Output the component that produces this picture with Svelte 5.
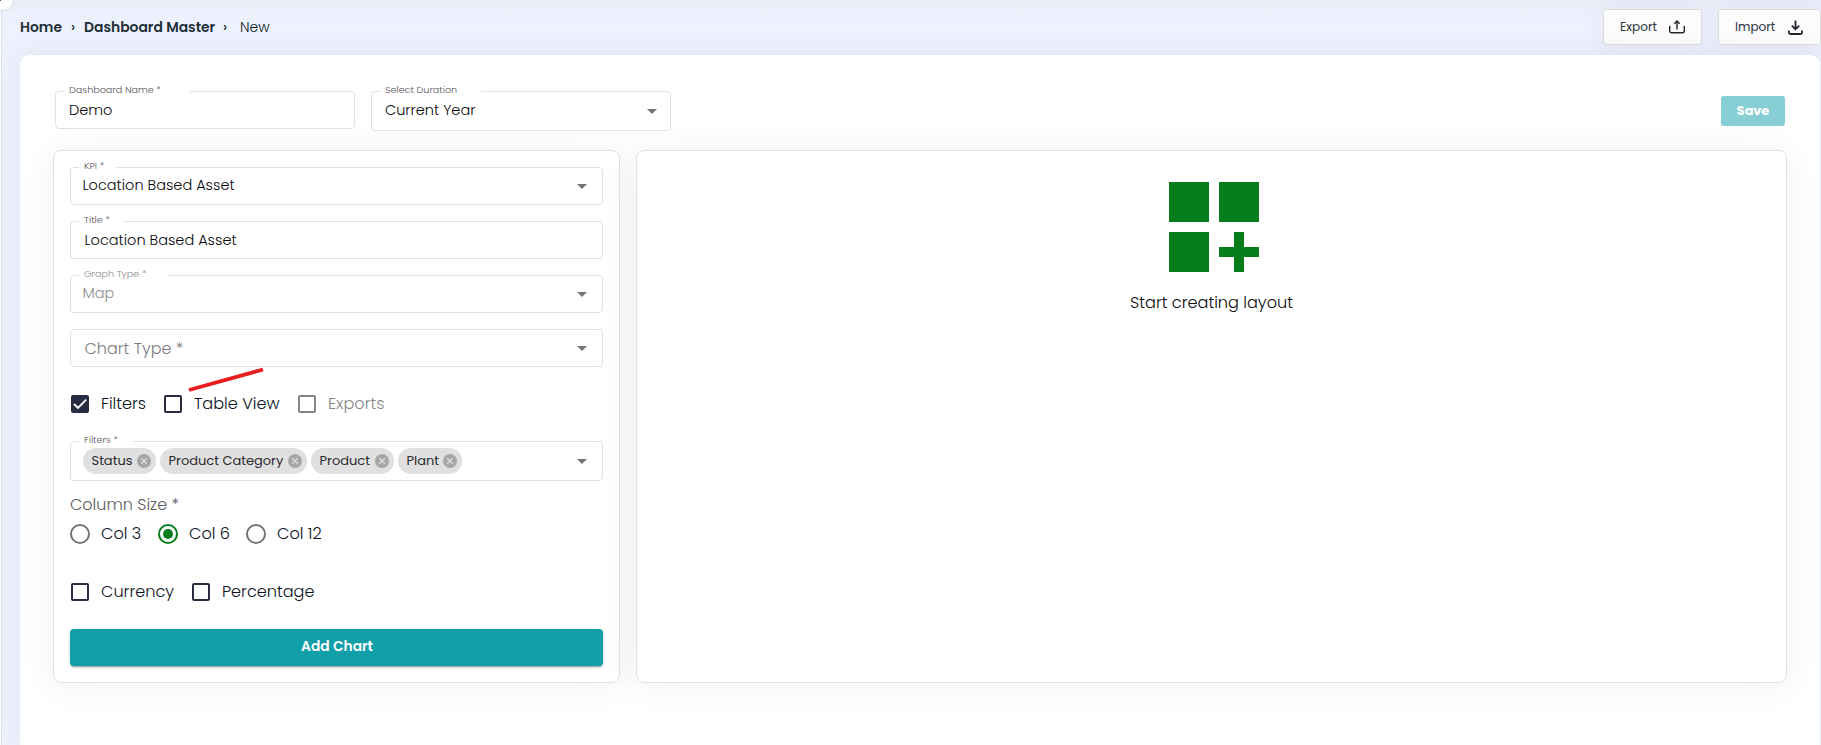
<script>
  const fields = [
    { label: 'KPI *', gap: 37, value: 'Location Based Asset', select: true },
    { label: 'Title *', gap: 44, value: 'Location Based Asset' },
    { label: 'Graph Type *', gap: 89, value: 'Map', select: true, disabled: true }
  ];

  const chips = [
    { text: 'Status', width: 73 },
    { text: 'Product Category', width: 147 },
    { text: 'Product', width: 83 },
    { text: 'Plant', width: 64 }
  ];

  const shown = [
    { text: 'Filters', width: 93, checked: true },
    { text: 'Table View', width: 134 },
    { text: 'Exports', width: 100, disabled: true }
  ];

  const columns = [{ text: 'Col 3' }, { text: 'Col 6', checked: true }, { text: 'Col 12' }];

  const units = [
    { text: 'Currency', width: 121 },
    { text: 'Percentage', width: 130 }
  ];
</script>

{#snippet caret()}
  <svg class="caret" width="10" height="5" viewBox="0 0 10 5"><path d="M0 0h10L5 5z" fill="#757575" /></svg>
{/snippet}

{#snippet label(text, gap)}
  <span class="label" style:width="{gap}px">{text}</span>
{/snippet}

{#snippet check(item)}
  <div class="choice check" class:disabled={item.disabled} style:width="{item.width}px">
    <svg width="18" height="18" viewBox="0 0 18 18">
      {#if item.checked}
        <rect width="18" height="18" rx="2" fill="#272c41" />
        <path d="M3 9l4 4 8.2-8.3" fill="none" stroke="#fff" stroke-width="1.9" />
      {:else}
        <rect x="1" y="1" width="16" height="16" rx="1" fill="none" stroke={item.disabled ? '#858585' : '#272c41'} stroke-width="2" />
      {/if}
    </svg>
    <span>{item.text}</span>
  </div>
{/snippet}

<div class="page">
  <div class="knob"><svg width="4" height="4" viewBox="0 0 4 4"><path d="M0 3L3 0" stroke="#555" /></svg></div>

  <header>
    <nav>
      <b class="home">Home</b><i>›</i><b class="master">Dashboard Master</b><i>›</i><span>New</span>
    </nav>
    <div class="actions">
      <button class="export">
        <span>Export</span>
        <svg width="16" height="14" viewBox="0 0 16 14" fill="none" stroke="#26262e" stroke-width="1.4">
          <path d="M.7 6v5.3q0 1.4 1.4 1.4h11.8q1.4 0 1.4-1.4V6M8 9.5V1.2M5.3 3.7L8 1l2.7 2.7" />
        </svg>
      </button>
      <button class="import">
        <span>Import</span>
        <svg width="15" height="15" viewBox="0 0 15 15" fill="none" stroke="#26262e" stroke-width="1.8">
          <path d="M.9 10.5v2q0 1.5 1.5 1.5h10.2q1.5 0 1.5-1.5v-2M7.5.5V9M3.8 5.6l3.7 3.7 3.7-3.7" />
        </svg>
      </button>
    </div>
  </header>

  <main>
    <div class="top">
      <div class="field name">
        {@render label('Dashboard Name *', 126)}
        <span class="value">Demo</span>
      </div>
      <div class="field duration">
        {@render label('Select Duration', 101)}
        <span class="value">Current Year</span>
        {@render caret()}
      </div>
      <button class="save">Save</button>
    </div>

    <div class="panels">
      <section class="panel form">
        {#each fields as f}
          <div class="field" class:select={f.select} class:disabled={f.disabled}>
            {@render label(f.label, f.gap)}
            <span class="value">{f.value}</span>
            {#if f.select}{@render caret()}{/if}
          </div>
        {/each}
        <div class="field">
          <span class="placeholder">Chart Type *</span>
          {@render caret()}
        </div>

        <div class="choices shown">
          {#each shown as item}{@render check(item)}{/each}
          <svg class="stroke" width="76" height="26" viewBox="0 0 76 26"><path d="M1 23L75 2.5" stroke="#e81c1f" stroke-width="3.8" /></svg>
        </div>

        <div class="field filters">
          {@render label('Filters *', 54)}
          {#each chips as chip}
            <div class="chip" style:width="{chip.width}px">
              <span>{chip.text}</span>
              <svg width="14" height="14" viewBox="0 0 14 14"><circle cx="7" cy="7" r="7" fill="#a6a6a6" /><path d="M4.2 4.2l5.6 5.6M9.8 4.2l-5.6 5.6" stroke="#e0e0e0" stroke-width="1.3" /></svg>
            </div>
          {/each}
          {@render caret()}
        </div>

        <div class="caption">Column Size *</div>
        <div class="choices columns">
          {#each columns as col}
            <div class="choice radio">
              <svg width="20" height="20" viewBox="0 0 20 20">
                <circle cx="10" cy="10" r="9" fill="none" stroke={col.checked ? '#067d1b' : '#757575'} stroke-width="2" />
                {#if col.checked}<circle cx="10" cy="10" r="5" fill="#067d1b" />{/if}
              </svg>
              <span>{col.text}</span>
            </div>
          {/each}
        </div>
        <div class="choices units">
          {#each units as item}{@render check(item)}{/each}
        </div>

        <button class="add">Add Chart</button>
      </section>

      <section class="panel canvas">
        <svg width="90" height="90" viewBox="0 0 90 90" fill="#067d1b" shape-rendering="crispEdges">
          <path d="M0 0h40v40H0zM50 0h40v40H50zM0 50h40v40H0zM65 50h10v15h15v10H75v15H65V75H50V65h15z" />
        </svg>
        <p>Start creating layout</p>
      </section>
    </div>
  </main>
</div>

<style>
  :global(body) { margin: 0; overflow: hidden; }
  .page, .page * { box-sizing: border-box; }
  .page {
    position: relative;
    height: 745px;
    padding: 0 1px 0 20px;
    overflow: hidden;
    background: linear-gradient(90deg, #fff 0 1px, #dcdfea 1px 2px, transparent 2px), linear-gradient(#e9edf8, #eef2fe 22px);
    font-family: Poppins, Inter, sans-serif;
    font-weight: 300;
    color: #09090c;
    display: flex;
    flex-direction: column;
  }
  .knob {
    position: absolute;
    left: -10px;
    top: -14px;
    width: 24px;
    height: 25px;
    border: 1px solid #dcdfe8;
    border-radius: 11px;
    background: #fff;
  }
  .knob svg { position: absolute; left: 8px; top: 12px; }
  button { font-family: inherit; border: 0; padding: 0; }

  header { height: 55px; flex: none; display: flex; justify-content: space-between; }
  nav { display: flex; height: 54px; align-items: center; font-size: 13.9px; color: #1f2f38; }
  nav b { font-weight: 600; white-space: nowrap; }
  nav i { font-style: normal; font-weight: 500; width: 22px; text-align: center; }
  .home { width: 42px; }
  .master { width: 131px; }
  nav .master + i { width: 20px; }
  nav span { margin-left: 5px; color: #0c171d; }
  .actions { display: flex; gap: 16px; padding-top: 9px; margin-right: -1px; }
  .actions button {
    height: 36px;
    border: 1px solid #dcdcde;
    border-radius: 3px;
    background: #fcfcfd;
    box-shadow: 0 0 25px rgba(60, 60, 90, .07);
    display: flex;
    align-items: center;
    padding-left: 16px;
    font-size: 12.1px;
    font-weight: 400;
    color: #2c3442;
  }
  .export { width: 99px; }
  .import { width: 103px; }
  .actions span { width: 49px; text-align: left; }
  .import span { width: 53px; }

  main {
    flex: 1;
    border-radius: 10px 10px 0 0;
    background: #fff;
    box-shadow: 0 0 30px rgba(50, 50, 100, .08);
    padding: 36px 33px 0;
  }
  .top { display: flex; align-items: flex-start; height: 59px; padding-left: 2px; }
  .field {
    position: relative;
    height: 38px;
    flex: none;
    border: 1px solid #e1e1e3;
    border-radius: 4px;
    background: #fff;
    padding: 0 0 0 13.5px;
    display: flex;
    align-items: center;
  }
  .select { padding: 0 0 1px 11.5px; }
  .label {
    position: absolute;
    left: 8px;
    top: -9px;
    height: 13px;
    line-height: 14px;
    padding-left: 5px;
    font-size: 9.6px;
    background: #fff;
    color: #55555a;
    white-space: nowrap;
  }
  .value { font-size: 14.5px; white-space: nowrap; }
  .disabled .value, .disabled .label { color: #8c8c8c; }
  .caret { position: absolute; right: 15px; top: 16px; }
  .name, .duration { width: 300px; padding-left: 13px; }
  .duration { margin-left: 16px; height: 40px; padding-bottom: 2px; }
  .duration .caret { right: 13px; top: 17px; }
  .save {
    margin: 5px 2px 0 auto;
    width: 64px;
    height: 30px;
    border-radius: 3px;
    background: #88cfd5;
    color: #fff;
    font-weight: 700;
    font-size: 12.8px;
    padding-bottom: 1px;
  }

  .panels { display: flex; gap: 16px; height: 533px; }
  .panel {
    border: 1px solid #dfe1e8;
    border-radius: 8px;
    background: #fff;
    box-shadow: 0 3px 40px rgba(0, 0, 0, .06);
  }
  .form { width: 567px; flex: none; padding: 16px; display: flex; flex-direction: column; }
  .form > .field:not(.filters) { margin-bottom: 16px; }
  .placeholder { font-size: 16px; color: #7c7c80; }
  .choices { position: relative; display: flex; height: 20px; flex: none; }
  .choice { display: flex; align-items: center; gap: 12px; font-size: 16.1px; color: #0c1222; white-space: nowrap; flex: none; }
  .choice svg { flex: none; }
  .choice span { line-height: 18px; margin-top: -1px; }
  .choice.disabled { color: #88888c; }
  .check { padding-left: 1px; }
  .radio { width: 88px; gap: 11px; }
  .shown { margin-top: 11px; }
  .stroke { position: absolute; left: 118px; top: -27px; }
  .filters { height: 40px; margin-top: 27px; padding: 0 0 1px 12px; gap: 4px; }
  .filters .caret { top: 17px; }
  .chip {
    height: 26px;
    flex: none;
    border-radius: 13px;
    background: #e0e0e0;
    display: flex;
    align-items: center;
    justify-content: space-between;
    padding: 0 5px 0 8.5px;
    font-size: 13px;
    font-weight: 400;
    color: #2a2a2e;
    white-space: nowrap;
  }
  .caption { margin-top: 14px; height: 20px; line-height: 20px; font-size: 16px; color: #5c5c60; }
  .columns { margin-top: 9px; }
  .units { margin-top: 38px; }
  .add {
    margin-top: 27px;
    height: 37px;
    border-radius: 4px;
    background: #109fa9;
    color: #fff;
    font-weight: 600;
    font-size: 13.8px;
    padding: 0 0 1px 1px;
    box-shadow: 0 2px 2px -1px rgba(0, 0, 0, .3), 0 1px 3px rgba(0, 0, 0, .2);
  }
  .canvas { flex: 1; display: flex; flex-direction: column; align-items: center; padding-top: 31px; }
  .canvas svg { margin-left: 5px; }
  .canvas p { margin: 21px 0 0; font-size: 16.1px; line-height: 20px; }
</style>
